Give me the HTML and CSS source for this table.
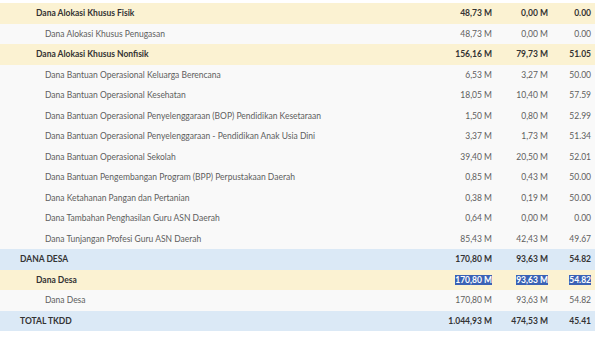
FILE: index.html
```html
<!DOCTYPE html>
<html>
<head>
<meta charset="utf-8">
<link rel="stylesheet" href="styles.css">
</head>
<body>
<div class="table">
  <div class="row sub"><div class="name l2">Dana Alokasi Khusus Fisik</div><div class="num">48,73 M</div><div class="num">0,00 M</div><div class="num">0.00</div></div>
  <div class="row"><div class="name l3">Dana Alokasi Khusus Penugasan</div><div class="num">48,73 M</div><div class="num">0,00 M</div><div class="num">0.00</div></div>
  <div class="row sub"><div class="name l2">Dana Alokasi Khusus Nonfisik</div><div class="num">156,16 M</div><div class="num">79,73 M</div><div class="num">51.05</div></div>
  <div class="row"><div class="name l3">Dana Bantuan Operasional Keluarga Berencana</div><div class="num">6,53 M</div><div class="num">3,27 M</div><div class="num">50.00</div></div>
  <div class="row"><div class="name l3">Dana Bantuan Operasional Kesehatan</div><div class="num">18,05 M</div><div class="num">10,40 M</div><div class="num">57.59</div></div>
  <div class="row"><div class="name l3">Dana Bantuan Operasional Penyelenggaraan (BOP) Pendidikan Kesetaraan</div><div class="num">1,50 M</div><div class="num">0,80 M</div><div class="num">52.99</div></div>
  <div class="row"><div class="name l3">Dana Bantuan Operasional Penyelenggaraan - Pendidikan Anak Usia Dini</div><div class="num">3,37 M</div><div class="num">1,73 M</div><div class="num">51.34</div></div>
  <div class="row"><div class="name l3">Dana Bantuan Operasional Sekolah</div><div class="num">39,40 M</div><div class="num">20,50 M</div><div class="num">52.01</div></div>
  <div class="row"><div class="name l3">Dana Bantuan Pengembangan Program (BPP) Perpustakaan Daerah</div><div class="num">0,85 M</div><div class="num">0,43 M</div><div class="num">50.00</div></div>
  <div class="row"><div class="name l3">Dana Ketahanan Pangan dan Pertanian</div><div class="num">0,38 M</div><div class="num">0,19 M</div><div class="num">50.00</div></div>
  <div class="row"><div class="name l3">Dana Tambahan Penghasilan Guru ASN Daerah</div><div class="num">0,64 M</div><div class="num">0,00 M</div><div class="num">0.00</div></div>
  <div class="row"><div class="name l3">Dana Tunjangan Profesi Guru ASN Daerah</div><div class="num">85,43 M</div><div class="num">42,43 M</div><div class="num">49.67</div></div>
  <div class="row top"><div class="name l1">DANA DESA</div><div class="num">170,80 M</div><div class="num">93,63 M</div><div class="num">54.82</div></div>
  <div class="row sub"><div class="name l2">Dana Desa</div><div class="num"><span class="sel">170,80 M</span></div><div class="num"><span class="sel">93,63 M</span></div><div class="num"><span class="sel">54.82</span></div></div>
  <div class="row"><div class="name l3">Dana Desa</div><div class="num">170,80 M</div><div class="num">93,63 M</div><div class="num">54.82</div></div>
  <div class="row top"><div class="name l1">TOTAL TKDD</div><div class="num">1.044,93 M</div><div class="num">474,53 M</div><div class="num">45.41</div></div>
</div>
</body>
</html>
```
FILE: styles.css
```css
html, body {
  margin: 0;
  padding: 0;
  background: #ffffff;
}
body {
  font-family: "Source Sans Pro", Lato, "Liberation Sans", sans-serif;
  font-size: 8.5px;
  color: #5e5e5e;
}
.table {
  width: 595px;
  padding-top: 3px;
}
.row {
  display: grid;
  grid-template-columns: 1fr 80px 56px 43px;
  height: 20.5px;
  align-items: center;
  background: #f9f9f9;
  padding-right: 4px;
}
.row.sub {
  background: #fbf2d2;
  font-weight: bold;
  color: #333;
}
.row.top {
  background: #dbe9f6;
  font-weight: bold;
  color: #333;
}
.name.l1 { padding-left: 20px; }
.name.l2 { padding-left: 36px; }
.name.l3 { padding-left: 45px; }
.num {
  text-align: right;
}
.sel {
  background: #3b62b5;
  color: #ffffff;
}
```
